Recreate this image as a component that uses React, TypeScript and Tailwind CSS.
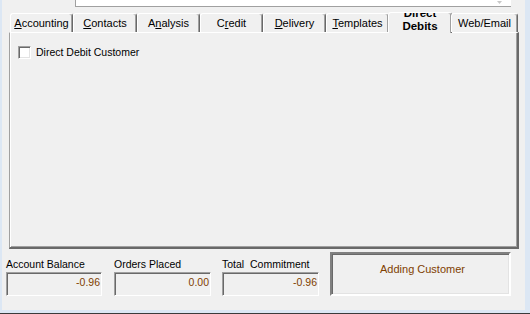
import React from 'react';

type Tab = {
  label: string;
  hot?: number;
  width: number;
};

const tabs: Tab[] = [
  { label: 'Accounting', hot: 0, width: 63 },
  { label: 'Contacts', hot: 0, width: 64 },
  { label: 'Analysis', hot: 1, width: 63 },
  { label: 'Credit', hot: 1, width: 63 },
  { label: 'Delivery', hot: 0, width: 63 },
  { label: 'Templates', hot: 0, width: 63 },
];

const font = { fontFamily: '"Liberation Sans", Arial, sans-serif' };

function Label({ text, hot }: { text: string; hot?: number }) {
  if (hot === undefined) return <>{text}</>;
  return (
    <>
      {text.slice(0, hot)}
      <span className="underline underline-offset-[1px]">{text[hot]}</span>
      {text.slice(hot + 1)}
    </>
  );
}

function TabButton({ tab }: { tab: Tab }) {
  return (
    <div
      className="h-[19px] shrink-0 flex items-center justify-center rounded-t-[3px] border-t border-l border-white border-r border-r-[#696969] shadow-[inset_-1px_0_0_#a0a0a0] text-[11px] leading-[13px] text-black"
      style={{ width: tab.width }}
    >
      <span className="pt-[1px]">
        <Label text={tab.label} hot={tab.hot} />
      </span>
    </div>
  );
}

function ValueBox({ label, value, width }: { label: string; value: string; width: number }) {
  return (
    <div className="flex flex-col shrink-0" style={{ width }}>
      <div className="text-[10.5px] leading-[13px] text-black whitespace-pre mb-[1px]">{label}</div>
      <div className="h-[24px] border border-t-[#a0a0a0] border-l-[#a0a0a0] border-r-white border-b-white shadow-[inset_1px_1px_0_#696969] text-right text-[10.5px] leading-[13px] text-[#804000] pt-[3px] pr-[1px]">
        {value}
      </div>
    </div>
  );
}

export default function App() {
  return (
    <div
      className="w-[530px] h-[314px] flex flex-col bg-[#dce7f4] pl-[2px] pr-[5px] pb-[3px] border-b border-[#3a3a3a] overflow-hidden"
      style={font}
    >
      <div className="flex-1 bg-[#f0f0f0] flex flex-col">
        {/* top text field */}
        <div className="ml-[73px] w-[436px] h-[7px] bg-white border-l border-b border-[#a0a0a0] flex justify-end pr-[9px]">
          <svg width="5" height="4" viewBox="0 0 5 4" className="mt-[1px]">
            <path d="M0 0h5L2.5 3z" fill="#c8c8c8" />
          </svg>
        </div>

        <div className="ml-[7px] w-[510px] mt-[4px] flex flex-col">
          {/* tabs */}
          <div className="h-[21px] flex items-end pl-[1px] relative z-10">
            {tabs.map((t) => (
              <TabButton key={t.label} tab={t} />
            ))}
            <div className="w-[64px] -mx-[1px] h-[21px] -mb-[1px] shrink-0 bg-[#f0f0f0] rounded-t-[3px] border-t border-l border-white border-r border-r-[#696969] shadow-[inset_-1px_0_0_#a0a0a0] overflow-hidden flex flex-col justify-end items-center text-[11.5px] font-bold leading-[13px] text-black">
              <span>Direct</span>
              <span>Debits</span>
            </div>
            <TabButton tab={{ label: 'Web/Email', width: 67 }} />
          </div>

          {/* panel */}
          <div className="h-[217px] border-t border-t-white border-l border-l-[#a0a0a0] border-r-2 border-r-[#696969] border-b-2 border-b-[#696969] shadow-[inset_1px_0_0_#ffffff,inset_-1px_-1px_0_#a0a0a0] pl-[8px] pt-[13px]">
            <div className="flex items-center gap-[5px]">
              <div className="w-[13px] h-[13px] bg-white border border-t-[#a0a0a0] border-l-[#a0a0a0] border-r-white border-b-white shadow-[inset_1px_1px_0_#696969,inset_-1px_-1px_0_#e3e3e3]" />
              <span className="text-[10.5px] leading-[13px] text-black">Direct Debit Customer</span>
            </div>
          </div>
        </div>

        {/* bottom summary */}
        <div className="mt-[3px] ml-[4px] flex items-end h-[44px]">
          <ValueBox label="Account Balance" value="-0.96" width={96} />
          <div className="ml-[12px]">
            <ValueBox label="Orders Placed" value="0.00" width={97} />
          </div>
          <div className="ml-[11px]">
            <ValueBox label="Total  Commitment" value="-0.96" width={97} />
          </div>
          <div className="ml-[11px] w-[181px] h-[44px] shrink-0 border-2 border-t-[#808080] border-l-[#808080] border-r-white border-b-white shadow-[inset_1px_1px_0_#696969,inset_-1px_-1px_0_#e3e3e3] text-center text-[11px] leading-[13px] text-[#804000] pt-[9px] pl-[4px]">
            Adding Customer
          </div>
        </div>
      </div>
    </div>
  );
}
